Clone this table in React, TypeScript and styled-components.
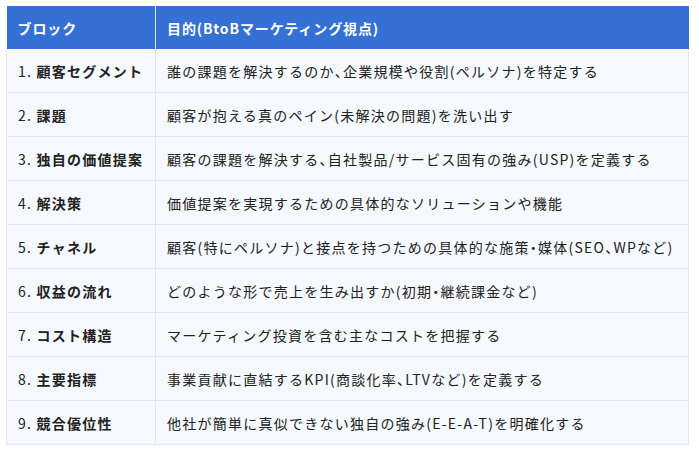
import React from 'react';
import styled, { createGlobalStyle } from 'styled-components';

const GlobalStyle = createGlobalStyle`
  body {
    margin: 0;
    background: #ffffff;
    font-family: 'Noto Sans CJK JP', 'Noto Sans', sans-serif;
  }
`;

const Page = styled.div`
  padding: 6px 10px 6px 6px;
`;

const Table = styled.table`
  width: 683px;
  border-collapse: collapse;
  font-size: 14px;
  letter-spacing: 1.25px;
  color: #222222;
`;

const HeadCell = styled.th`
  height: 43px;
  padding: 0 11px;
  text-align: left;
  font-weight: 700;
  letter-spacing: 0.9px;
  color: #ffffff;
  background-color: #3570d4;
  border-right: 1px solid #e4e8ee;
  &:last-child {
    border-right: none;
  }
`;

const Row = styled.tr`
  background-color: #f5f8fc;
  border-bottom: 1px solid #e3e7ec;
`;

type CellPropsType = {
  first?: boolean;
};

const Cell = styled.td<CellPropsType>`
  height: 43px;
  padding: 0 11px;
  width: ${(props) => (props.first ? '126px' : 'auto')};
  border-left: 1px solid #e3e7ec;
  border-right: 1px solid #e3e7ec;
  white-space: nowrap;
  .num {
    font-weight: 400;
  }
  .name {
    font-weight: 700;
  }
`;

// 、 and ・ are set half width in the reference
const Punct = styled.span`
  font-feature-settings: 'halt';
`;

const withPunct = (text: string) =>
  text.split(/([、・])/).map((part, i) =>
    part === '、' || part === '・' ? <Punct key={i}>{part}</Punct> : part,
  );

const rows = [
  ['顧客セグメント', '誰の課題を解決するのか、企業規模や役割(ペルソナ)を特定する'],
  ['課題', '顧客が抱える真のペイン(未解決の問題)を洗い出す'],
  ['独自の価値提案', '顧客の課題を解決する、自社製品/サービス固有の強み(USP)を定義する'],
  ['解決策', '価値提案を実現するための具体的なソリューションや機能'],
  ['チャネル', '顧客(特にペルソナ)と接点を持つための具体的な施策・媒体(SEO、WPなど)'],
  ['収益の流れ', 'どのような形で売上を生み出すか(初期・継続課金など)'],
  ['コスト構造', 'マーケティング投資を含む主なコストを把握する'],
  ['主要指標', '事業貢献に直結するKPI(商談化率、LTVなど)を定義する'],
  ['競合優位性', '他社が簡単に真似できない独自の強み(E-E-A-T)を明確化する'],
];

const App: React.FC = () => (
  <Page>
    <GlobalStyle />
    <Table>
      <thead>
        <tr>
          <HeadCell>ブロック</HeadCell>
          <HeadCell>目的(BtoBマーケティング視点)</HeadCell>
        </tr>
      </thead>
      <tbody>
        {rows.map(([name, purpose], i) => (
          <Row key={name}>
            <Cell first>
              <span className="num">{i + 1}. </span>
              <span className="name">{name}</span>
            </Cell>
            <Cell>{withPunct(purpose)}</Cell>
          </Row>
        ))}
      </tbody>
    </Table>
  </Page>
);

export default App;
